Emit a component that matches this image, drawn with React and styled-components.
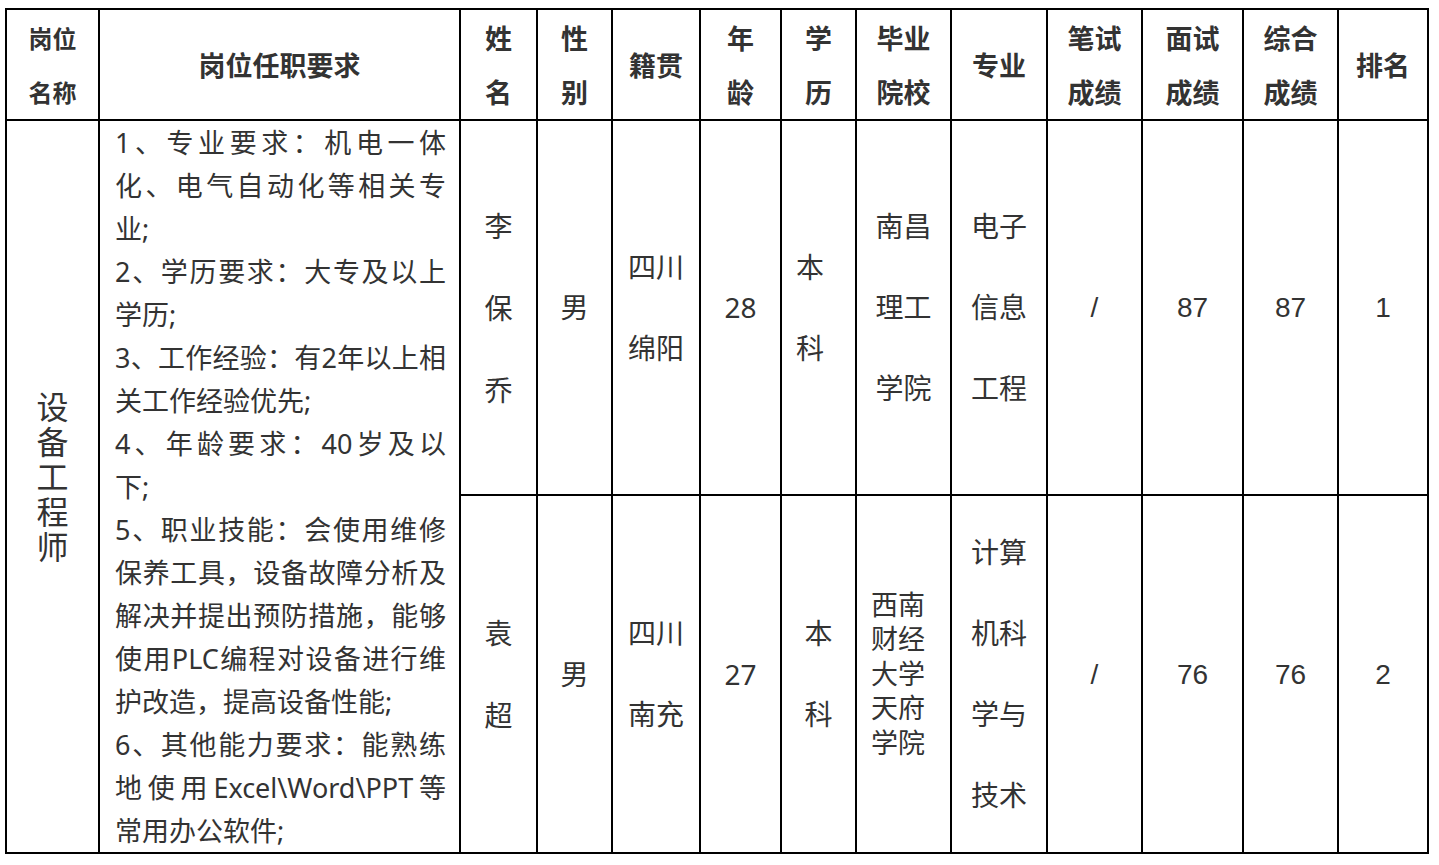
import React from "react";
import styled, { createGlobalStyle } from "styled-components";

const Global = createGlobalStyle`
  html, body { margin: 0; padding: 0; background: #fff; }
  body { font-family: "Noto Sans", "Noto Sans CJK SC", sans-serif; color: #333; }
`;

const Table = styled.table`
  border-collapse: collapse;
  table-layout: fixed;
  width: 1424px;
  margin: 8px 0 0 5px;
  color: #333;
  font-family: "Noto Sans", "Noto Sans CJK SC", sans-serif;
`;

const HeadRow = styled.tr`
  height: 111px;
`;

const BodyRow = styled.tr`
  height: ${(p) => p.$h}px;
`;

const HeadCell = styled.th`
  border: 2px solid #000;
  padding: 0;
  font-weight: 700;
  font-size: ${(p) => (p.$small ? 24 : 27)}px;
  line-height: 54px;
  text-align: center;
  vertical-align: middle;
  font-family: "Noto Sans CJK SC", sans-serif;
`;

const Cell = styled.td`
  border: 2px solid #000;
  padding: ${(p) => (p.$align === "left" ? "0 0 0 14px" : "0")};
  text-align: ${(p) => p.$align || "center"};
  vertical-align: middle;
  font-size: ${(p) => p.$fs || 28}px;
  line-height: ${(p) => p.$lh || 81}px;
  font-family: ${(p) =>
    p.$arial
      ? '"Liberation Sans", Arial, sans-serif'
      : '"Noto Sans", "Noto Sans CJK SC", sans-serif'};
`;

const ReqCell = styled.td`
  border: 2px solid #000;
  padding: 0 13px 0 15px;
  vertical-align: middle;
  font-size: 27px;
  line-height: 43px;
`;

const ReqLine = styled.div`
  text-align: ${(p) => (p.$justify ? "justify" : "left")};
  text-align-last: ${(p) => (p.$justify ? "justify" : "left")};
`;

const VerticalTitle = styled.td`
  border: 2px solid #000;
  padding: 0 0 12px;
  text-align: center;
  vertical-align: middle;
  font-family: "Noto Sans CJK SC", sans-serif;
`;

const VerticalText = styled.span`
  display: inline-block;
  writing-mode: vertical-rl;
  text-orientation: upright;
  font-size: 32px;
  line-height: 36px;
  letter-spacing: 3px;
`;

const Line = styled.span`
  display: block;
`;

const Stack = ({ lines }) =>
  lines.map((l, i) => <Line key={i}>{l}</Line>);

const widths = [93, 361, 77, 75, 88, 81, 75, 95, 96, 95, 101, 95, 90];

const reqLines = [
  ["1、专业要求：机电一体", true],
  ["化、电气自动化等相关专", true],
  ["业;", false],
  ["2、学历要求：大专及以上", true],
  ["学历;", false],
  ["3、工作经验：有2年以上相", true],
  ["关工作经验优先;", false],
  ["4、年龄要求：40岁及以", true],
  ["下;", false],
  ["5、职业技能：会使用维修", true],
  ["保养工具，设备故障分析及", true],
  ["解决并提出预防措施，能够", true],
  ["使用PLC编程对设备进行维", true],
  ["护改造，提高设备性能;", false],
  ["6、其他能力要求：能熟练", true],
  ["地使用Excel\\Word\\PPT等", true],
  ["常用办公软件;", false],
];

export default function App() {
  return (
    <>
      <Global />
      <Table>
        <colgroup>
          {widths.map((w, i) => (
            <col key={i} style={{ width: w }} />
          ))}
        </colgroup>
        <thead>
          <HeadRow>
            <HeadCell $small>
              <Stack lines={["岗位", "名称"]} />
            </HeadCell>
            <HeadCell>岗位任职要求</HeadCell>
            <HeadCell>
              <Stack lines={["姓", "名"]} />
            </HeadCell>
            <HeadCell>
              <Stack lines={["性", "别"]} />
            </HeadCell>
            <HeadCell>籍贯</HeadCell>
            <HeadCell>
              <Stack lines={["年", "龄"]} />
            </HeadCell>
            <HeadCell>
              <Stack lines={["学", "历"]} />
            </HeadCell>
            <HeadCell>
              <Stack lines={["毕业", "院校"]} />
            </HeadCell>
            <HeadCell>专业</HeadCell>
            <HeadCell>
              <Stack lines={["笔试", "成绩"]} />
            </HeadCell>
            <HeadCell>
              <Stack lines={["面试", "成绩"]} />
            </HeadCell>
            <HeadCell>
              <Stack lines={["综合", "成绩"]} />
            </HeadCell>
            <HeadCell>排名</HeadCell>
          </HeadRow>
        </thead>
        <tbody>
          <BodyRow $h={375}>
            <VerticalTitle rowSpan={2}>
              <VerticalText>设备工程师</VerticalText>
            </VerticalTitle>
            <ReqCell rowSpan={2}>
              {reqLines.map(([t, j], i) => (
                <ReqLine key={i} $justify={j}>
                  {t}
                </ReqLine>
              ))}
            </ReqCell>
            <Cell $lh={82}>
              <Stack lines={["李", "保", "乔"]} />
            </Cell>
            <Cell>男</Cell>
            <Cell>
              <Stack lines={["四川", "绵阳"]} />
            </Cell>
            <Cell>28</Cell>
            <Cell $align="left">
              <Stack lines={["本", "科"]} />
            </Cell>
            <Cell>
              <Stack lines={["南昌", "理工", "学院"]} />
            </Cell>
            <Cell>
              <Stack lines={["电子", "信息", "工程"]} />
            </Cell>
            <Cell $arial>/</Cell>
            <Cell $arial>87</Cell>
            <Cell $arial>87</Cell>
            <Cell $arial>1</Cell>
          </BodyRow>
          <BodyRow $h={358}>
            <Cell $lh={82}>
              <Stack lines={["袁", "超"]} />
            </Cell>
            <Cell>男</Cell>
            <Cell>
              <Stack lines={["四川", "南充"]} />
            </Cell>
            <Cell>27</Cell>
            <Cell>
              <Stack lines={["本", "科"]} />
            </Cell>
            <Cell $align="left" $lh={34.5} $fs={27}>
              <Stack lines={["西南", "财经", "大学", "天府", "学院"]} />
            </Cell>
            <Cell>
              <Stack lines={["计算", "机科", "学与", "技术"]} />
            </Cell>
            <Cell $arial>/</Cell>
            <Cell $arial>76</Cell>
            <Cell $arial>76</Cell>
            <Cell $arial>2</Cell>
          </BodyRow>
        </tbody>
      </Table>
    </>
  );
}
